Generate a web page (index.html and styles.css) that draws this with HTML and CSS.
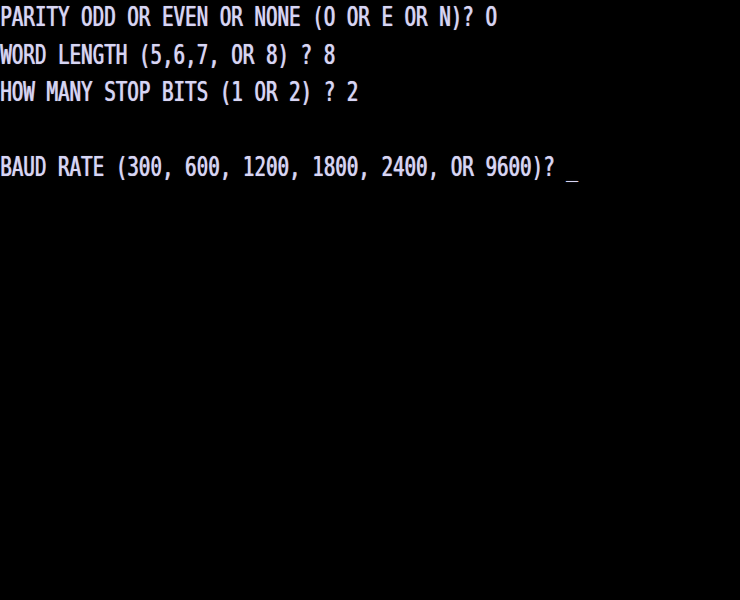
FILE: index.html
```html
<!DOCTYPE html>
<html>
<head>
<meta charset="utf-8">
<link rel="stylesheet" href="styles.css">
</head>
<body>
<div class="screen">
  <div class="row"><span class="txt">PARITY ODD OR EVEN OR NONE (O OR E OR N)? O</span></div>
  <div class="row"><span class="txt">WORD LENGTH (5,6,7, OR 8) ? 8</span></div>
  <div class="row"><span class="txt">HOW MANY STOP BITS (1 OR 2) ? 2</span></div>
  <div class="row"><span class="txt"></span></div>
  <div class="row"><span class="txt">BAUD RATE (300, 600, 1200, 1800, 2400, OR 9600)? <span class="cursor">_</span></span></div>
</div>
</body>
</html>
```

FILE: styles.css
```css
html, body {
  margin: 0;
  padding: 0;
  background: #000;
}
.screen {
  width: 740px;
  height: 600px;
  background: #000;
  overflow: hidden;
  display: flex;
  flex-direction: column;
}
.row {
  height: 37.5px;
  flex: 0 0 37.5px;
  white-space: pre;
}
.txt {
  display: inline-block;
  font-family: "DejaVu Sans Mono", monospace;
  font-size: 19.2px;
  line-height: normal;
  color: #d8d6f4;
  transform: scaleY(1.43);
  transform-origin: 0 0;
  text-shadow: 0.7px 0 0 rgba(216, 214, 244, 0.85), 0 0 1px rgba(200, 200, 255, 0.4);
}
.cursor {
  color: #d8d6f4;
}
```
